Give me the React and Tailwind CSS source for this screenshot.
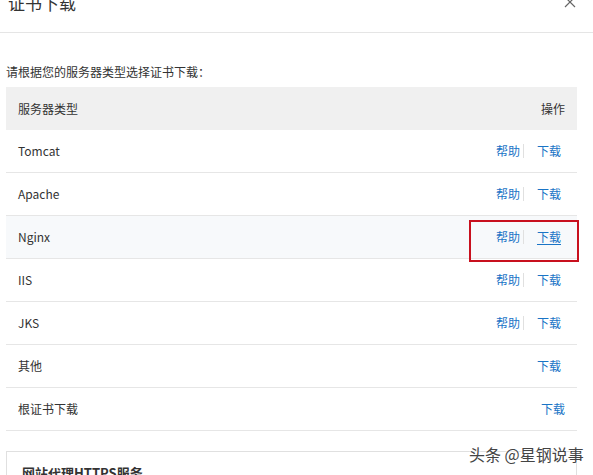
import React from 'react';

const rows = [
  { name: 'Tomcat', help: true },
  { name: 'Apache', help: true },
  { name: 'Nginx', help: true, active: true },
  { name: 'IIS', help: true },
  { name: 'JKS', help: true },
  { name: '其他', help: false },
  { name: '根证书下载', help: false, root: true },
];

const font = { fontFamily: '"Noto Sans CJK SC", "Noto Sans", sans-serif' };

const App = () => {
  return (
    <div className="relative w-[593px] h-[475px] overflow-hidden bg-white text-[#333]" style={font}>
      {/* Header */}
      <div className="relative h-[33px] border-b border-[#e5e5e5] overflow-hidden">
        <h2 className="absolute left-[8px] top-[-10px] text-[17px] leading-[26px] text-[#333] font-normal">证书下载</h2>
        <svg className="absolute left-[564px] top-[-4px]" width="12" height="12" viewBox="0 0 12 12">
          <path d="M1 1 L11 11 M11 1 L1 11" stroke="#666" strokeWidth="1.2" fill="none" />
        </svg>
      </div>

      {/* Body */}
      <div className="px-[6px] pt-[29px]">
        <p className="text-[12px] leading-[20px] mb-[5px]">请根据您的服务器类型选择证书下载：</p>

        <div className="w-[571px]">
          <div className="flex items-center justify-between h-[43px] bg-[#f0f0f0] pl-[12px] pr-[12px] text-[12px]">
            <span>服务器类型</span>
            <span>操作</span>
          </div>

          {rows.map((row) => (
            <div
              key={row.name}
              className={`relative flex items-center justify-between h-[43px] border-b border-[#e6e6e6] pl-[12px] text-[12px] ${
                row.active ? 'bg-[#f7f9fb] z-10' : 'bg-white'
              } ${row.root ? 'pr-[12px]' : 'pr-[16px]'}`}
            >
              <span>{row.name}</span>
              <div className="flex items-center text-[#1a74c6]">
                {row.help && (
                  <>
                    <a className="cursor-pointer">帮助</a>
                    <span className="ml-[3px] mr-[13px] w-px h-[14px] bg-[#e0e0e0]" />
                  </>
                )}
                <a className={`cursor-pointer ${row.active ? 'underline underline-offset-2' : ''}`}>下载</a>
              </div>
              {row.active && (
                <div className="absolute z-10 right-[-2px] top-[4px] w-[110px] h-[42px] border-2 border-[#c8101e]" />
              )}
            </div>
          ))}
        </div>

        {/* Proxy HTTPS box */}
        <div className="mt-[20px] w-[571px] h-[60px] border border-[#e0e0e0] px-[15px] pt-[12px]">
          <h3 className="text-[13px] leading-[18px] font-bold text-[#333]">网站代理HTTPS服务</h3>
        </div>
      </div>

      {/* Watermark */}
      <div
        className="absolute left-[469px] top-[444px] text-[16px] leading-[20px] text-[#444] whitespace-nowrap"
        style={{ textShadow: '0 0 2px #fff, 0 0 2px #fff, 0 0 3px #fff' }}
      >
        头条 @星钢说事
      </div>
    </div>
  );
};

export default App;
